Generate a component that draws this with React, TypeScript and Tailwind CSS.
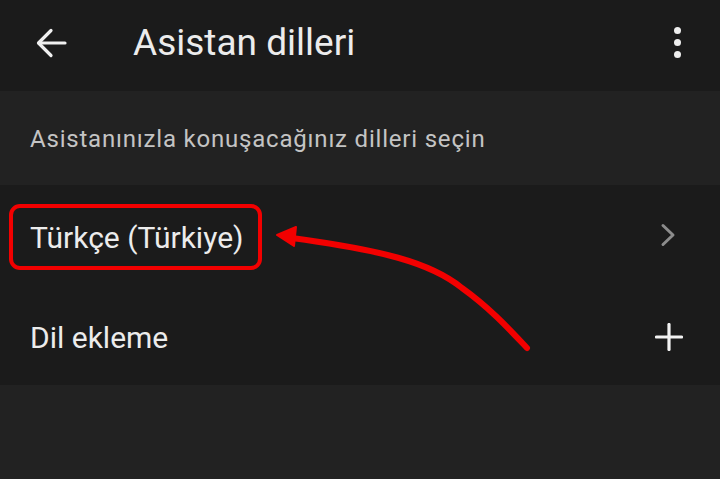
export default function App() {
  return (
    <div className="relative w-[720px] h-[479px] overflow-hidden bg-[#222222] text-[#ececec]" style={{ fontFamily: 'Roboto, "Noto Sans", sans-serif' }}>
      {/* Top bar */}
      <header className="h-[91px] bg-[#1b1b1b] flex items-center pb-[6px]">
        <div className="w-[133px] flex items-center pl-[36px]">
          <svg width="31" height="30" viewBox="0 0 31 30" fill="none" stroke="#f0f0f0" strokeWidth="3.2" strokeLinecap="round" strokeLinejoin="round">
            <path d="M29 15H3" />
            <path d="M15 2.5L2.5 15L15 27.5" />
          </svg>
        </div>
        <h1 className="flex-1 text-[37px] leading-none text-[#ececec]">Asistan dilleri</h1>
        <div className="w-[82px] flex flex-col items-center gap-[5px] pr-[4px]">
          <span className="w-[7px] h-[7px] rounded-full bg-[#eeeeee]" />
          <span className="w-[7px] h-[7px] rounded-full bg-[#eeeeee]" />
          <span className="w-[7px] h-[7px] rounded-full bg-[#eeeeee]" />
        </div>
      </header>

      {/* Description */}
      <div className="h-[94px] flex items-center pl-[30px] pt-[2px]">
        <p className="text-[24px] text-[#c4c4c4] tracking-[0.8px]">Asistanınızla konuşacağınız dilleri seçin</p>
      </div>

      {/* Language list */}
      <div className="bg-[#1b1b1b]">
        <div className="h-[100px] flex items-center justify-between pl-[9px] pr-[44px]">
          <div className="border-4 border-[#f20000] rounded-[11px] h-[66px] w-[253px] flex items-center pl-[17px] mt-[4px]">
            <span className="text-[30px] text-[#ececec]">Türkçe (Türkiye)</span>
          </div>
          <svg width="16" height="24" viewBox="0 0 16 24" fill="none" stroke="#8c8c8c" strokeWidth="3" strokeLinecap="round" strokeLinejoin="round">
            <path d="M3 2.5L13 12L3 21.5" />
          </svg>
        </div>
        <div className="h-[100px] flex items-center justify-between pl-[30px] pr-[37px] pt-[4px]">
          <span className="text-[30px] text-[#ececec]">Dil ekleme</span>
          <svg width="28" height="28" viewBox="0 0 28 28" fill="none" stroke="#f2f2f2" strokeWidth="3.2" strokeLinecap="round">
            <path d="M14 1.5V26.5" />
            <path d="M1.5 14H26.5" />
          </svg>
        </div>
      </div>

      {/* Annotation arrow */}
      <svg className="absolute inset-0 pointer-events-none" width="720" height="479" viewBox="0 0 720 479" fill="none">
        <path d="M292 238 C380 250 430 262 462 288 C490 308 510 330 527 348" stroke="#f20000" strokeWidth="6" strokeLinecap="round" />
        <path d="M277 235 L296 227 L294 246 Z" fill="#f20000" stroke="#f20000" strokeWidth="2" strokeLinejoin="round" />
      </svg>
    </div>
  );
}
